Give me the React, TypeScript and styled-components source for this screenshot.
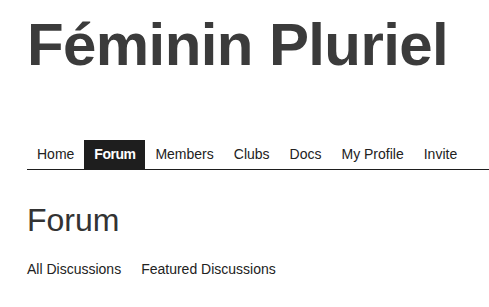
import React from 'react'
import styled, { createGlobalStyle } from 'styled-components'

const navItems = ['Home', 'Forum', 'Members', 'Clubs', 'Docs', 'My Profile', 'Invite']
const subLinks = ['All Discussions', 'Featured Discussions']

const App = () => {
  return (
    <>
      <GlobalStyle />
      <Page>
        <SiteTitle>Féminin Pluriel</SiteTitle>
        <Nav>
          {navItems.map(item => (
            <NavItem key={item} $active={item === 'Forum'}>{item}</NavItem>
          ))}
        </Nav>
        <PageTitle>Forum</PageTitle>
        <SubNav>
          {subLinks.map(link => (
            <SubLink key={link}>{link}</SubLink>
          ))}
        </SubNav>
      </Page>
    </>
  )
}

export default App

const GlobalStyle = createGlobalStyle`
  html, body {
    margin: 0;
    padding: 0;
    background: #ffffff;
  }
  body {
    font-family: "Liberation Sans", Arial, sans-serif;
    color: #333333;
  }
`

const Page = styled.div`
  padding: 10px 0 20px 27px;
`

const SiteTitle = styled.h1`
  margin: 0;
  font-size: 60px;
  font-weight: 700;
  line-height: 69px;
  color: #3b3b3b;
  letter-spacing: -0.6px;
`

const Nav = styled.ul`
  display: flex;
  margin: 61px 0 0;
  padding: 0;
  list-style: none;
  border-bottom: 1px solid #1e1e1e;
`

const NavItem = styled.li<{ $active?: boolean }>`
  padding: 5px 10px;
  font-size: 14px;
  line-height: 19px;
  color: ${p => (p.$active ? '#ffffff' : '#222222')};
  background: ${p => (p.$active ? '#1e1e1e' : 'transparent')};
  font-weight: ${p => (p.$active ? 700 : 400)};
  letter-spacing: ${p => (p.$active ? '-0.5px' : '0')};
`

const PageTitle = styled.h2`
  margin: 31px 0 0;
  font-size: 32px;
  font-weight: 400;
  line-height: 39px;
  color: #333333;
`

const SubNav = styled.div`
  display: flex;
  column-gap: 20px;
  margin-top: 21px;
`

const SubLink = styled.span`
  font-size: 14px;
  line-height: 16px;
  color: #222222;
`
